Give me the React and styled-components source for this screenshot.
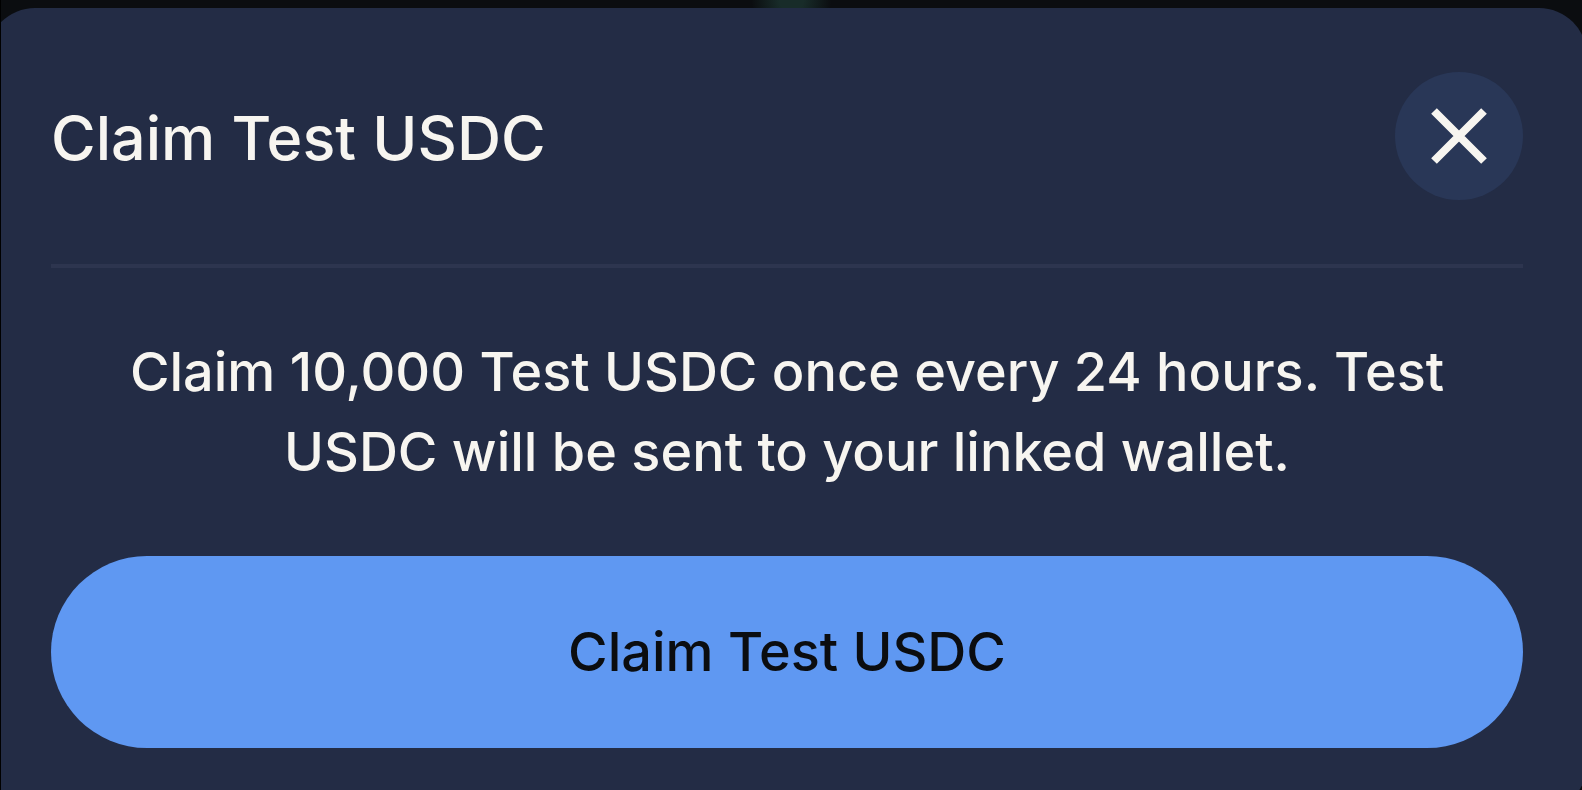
import React from 'react';
import styled, { createGlobalStyle } from 'styled-components';

const GlobalStyle = createGlobalStyle`
  * {
    box-sizing: border-box;
  }
  body {
    margin: 0;
    background: #0b0d10;
    color: #f7f5f0;
    font-family: Inter, 'Liberation Sans', sans-serif;
  }
`;

const Backdrop = styled.main`
  min-height: 100vh;
  max-height: 100vh;
  padding-top: 8px;
  overflow: hidden;
  border-left: 1px solid #000;
  background: radial-gradient(ellipse 40px 40px at 50% 0, #182c29 30%, #0b0d10);
`;

const Modal = styled.section`
  margin: 0 -5px 0 -14px;
  padding: 64px;
  border-radius: 48px;
  background: #232c45;
`;

const Header = styled.header`
  display: flex;
  align-items: center;
  justify-content: space-between;
  padding-bottom: 64px;
  border-bottom: 4px solid #2d354f;
`;

const Title = styled.h2`
  margin: 0;
  padding-top: 4px;
  font-size: 61px;
  font-weight: 500;
  line-height: 80px;
`;

const CloseButton = styled.button`
  display: flex;
  align-items: center;
  justify-content: center;
  width: 128px;
  height: 128px;
  padding: 0;
  border: none;
  border-radius: 50%;
  background: #293757;
  color: inherit;
  cursor: pointer;
`;

const Description = styled.p`
  margin: 64px 0;
  font-size: 54px;
  font-weight: 500;
  line-height: 80px;
  text-align: center;
`;

const ClaimButton = styled.button`
  display: block;
  width: 100%;
  padding: 56px 64px;
  border: none;
  border-radius: 96px;
  background: #5f98f2;
  color: #0b0d10;
  font-family: inherit;
  font-size: 54px;
  font-weight: 500;
  line-height: 80px;
  cursor: pointer;
`;

const CloseIcon = () => (
  <svg width="56" height="56" viewBox="0 0 56 56" aria-hidden="true">
    <path
      d="M3 3L53 53M53 3L3 53"
      stroke="currentColor"
      strokeWidth="8"
    />
  </svg>
);

const App = () => (
  <>
    <GlobalStyle />
    <Backdrop>
      <Modal role="dialog" aria-labelledby="claim-title">
        <Header>
          <Title id="claim-title">Claim Test USDC</Title>
          <CloseButton type="button" aria-label="Close">
            <CloseIcon />
          </CloseButton>
        </Header>
        <Description>
          Claim 10,000 Test USDC once every 24 hours. Test USDC will be sent to
          your linked wallet.
        </Description>
        <ClaimButton type="button">Claim Test USDC</ClaimButton>
      </Modal>
    </Backdrop>
  </>
);

export default App;
